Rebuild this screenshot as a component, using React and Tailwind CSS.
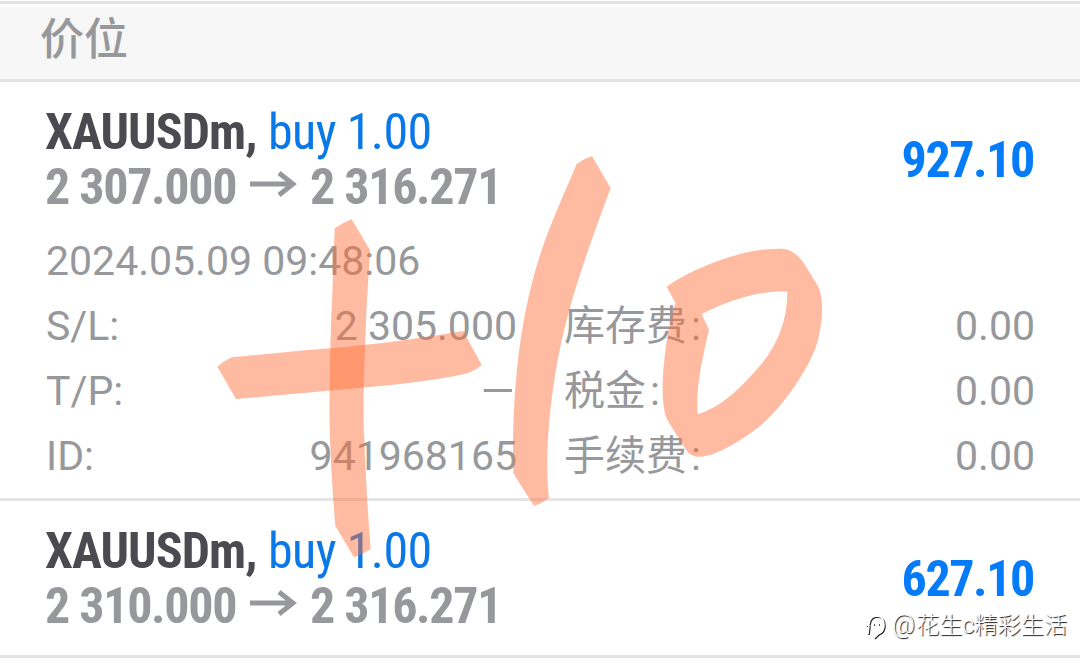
const positions = [
  {
    symbol: 'XAUUSDm,',
    side: 'buy 1.00',
    open: '2 307.000',
    close: '2 316.271',
    profit: '927.10',
    time: '2024.05.09 09:48:06',
    details: [
      { label: 'S/L:', value: '2 305.000', feeLabel: '库存费', fee: '0.00' },
      { label: 'T/P:', value: '–', feeLabel: '税金', fee: '0.00' },
      { label: 'ID:', value: '941968165', feeLabel: '手续费', fee: '0.00' },
    ],
  },
  { symbol: 'XAUUSDm,', side: 'buy 1.00', open: '2 310.000', close: '2 316.271', profit: '627.10' },
];

const Arrow = () => (
  <svg className="w-[47px] h-[26px] shrink-0 -mt-[7px]" viewBox="0 0 47 26" fill="none" stroke="#97989b" strokeWidth="4.8">
    <path d="M0 13H43M29 2L43 13L29 24" />
  </svg>
);

const PositionRow = ({ item }) => (
  <div className="border-b-[3px] border-[#e4e4e4] pl-[45px] pr-[45px] pt-[23px]">
    <div className="flex justify-between items-center h-[110px] font-['Roboto_Condensed',Roboto,sans-serif] text-[50px] leading-[55px] whitespace-nowrap">
      <div>
        <div className="flex">
          <div className="w-[223px] font-bold tracking-[-0.95px] text-[#4b4a50]">{item.symbol}</div>
          <div className="tracking-[-0.6px] text-[#0b78e8]">{item.side}</div>
        </div>
        <div className="flex items-center font-bold tracking-[-1.3px] text-[#97989b]">
          <div className="w-[205px]">{item.open}</div>
          <Arrow />
          <div className="ml-[13px]">{item.close}</div>
        </div>
      </div>
      <div className="font-bold tracking-[-1.4px] mr-px text-[#047bf8]">{item.profit}</div>
    </div>
    {item.details ? (
      <div className="mt-[14px] pb-[9px] text-[41px] leading-[65px] text-[#97989b] whitespace-nowrap">
        <div className="ml-px">{item.time}</div>
        {item.details.map((d) => (
          <div key={d.label} className="flex ml-px">
            <div className="flex justify-between w-[471px]">
              <span>{d.label}</span>
              <span className={d.value === '–' ? 'origin-right scale-x-140' : ''}>{d.value}</span>
            </div>
            <div className="flex flex-1 justify-between ml-[47px]">
              <span>{d.feeLabel}<span className="ml-1">:</span></span>
              <span>{d.fee}</span>
            </div>
          </div>
        ))}
      </div>
    ) : (
      <div className="h-[21px]" />
    )}
  </div>
);

// Hand-drawn "+10" in translucent marker, each stroke overlaps on its own
const MarkerNote = () => (
  <svg className="absolute inset-0 w-[1080px] h-[667px] pointer-events-none" viewBox="0 0 1080 667">
    <g transform="translate(200 140) scale(0.33333)" fill="#ff6e37" fillOpacity="0.47">
      <path d="M404 265Q430 247 455 238L510 330Q504 430 500 500Q487 780 492 880Q498 1050 512 1227Q488 1243 462 1252L406 1158Q385 900 389 760Q390 600 397 460Z" />
      <path d="M52 680Q70 664 95 652L300 632Q560 614 790 573L845 675Q828 690 803 700Q700 724 500 742L108 777Z" />
      <path d="M1130 72Q1152 55 1176 48L1232 145C1145 378 1105 500 1075 650C1048 790 1033 960 1047 1073Q1026 1090 1002 1098L940 1000C936 860 944 650 986 470C1022 310 1070 215 1130 72Z" />
      <path
        fillRule="evenodd"
        d="M1400 440C1470 390 1620 325 1740 326C1770 326 1790 340 1810 367L1855 440C1873 480 1868 560 1848 620C1820 695 1756 785 1700 840C1640 895 1540 955 1490 950Q1468 948 1455 925L1402 840C1380 790 1386 690 1404 580Q1413 530 1426 488ZM1505 522L1527 570C1501 680 1488 750 1493 823C1550 805 1600 765 1650 710C1720 640 1762 560 1762 455C1680 450 1590 480 1505 522Z"
      />
    </g>
  </svg>
);

const Watermark = () => (
  <div className="absolute left-[865px] top-[609px] flex items-center text-[23.2px] leading-[32px] font-light text-white whitespace-nowrap [text-shadow:1px_1px_1px_#111]">
    <svg className="w-[22px] h-[28px] mr-[5px] mt-1" viewBox="0 0 22 28" fill="none">
      <path d="M2 13Q4 14 5 12Q6 4 13 4Q20 5 20 13Q20 20 14 22L10 26M5 13L4 22M9 12H10M14 12H15" stroke="#222" strokeWidth="1.6" />
      <path d="M1 12Q3 13 4 11Q5 3 12 3Q19 4 19 12Q19 19 13 21L9 25M4 12L3 21" stroke="#fff" strokeWidth="1.6" />
    </svg>
    <span className="w-[24px] text-[25px]">@</span>花生c精彩生活
  </div>
);

export default function App() {
  return (
    <div className="relative w-[1080px] h-[667px] overflow-hidden bg-white font-[Roboto,'Noto_Sans_CJK_SC',sans-serif]">
      <div className="h-[7px] pt-px">
        <div className="h-[3px] bg-[#e4e4e4]" />
      </div>
      <div className="h-[75px] border-b-[3px] border-[#e4e4e4] bg-[#f7f7f7] pl-10 text-[44px] leading-[66px] font-medium text-[#97989b]">
        价位
      </div>
      {positions.map((p) => (
        <PositionRow key={p.open} item={p} />
      ))}
      <MarkerNote />
      <Watermark />
    </div>
  );
}
